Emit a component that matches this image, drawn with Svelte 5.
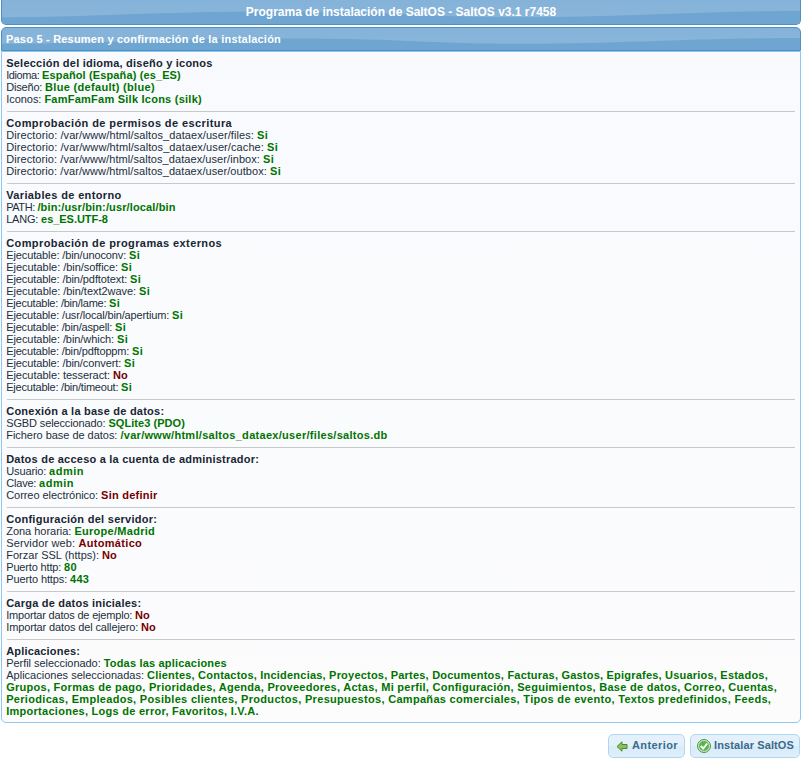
<script>
  // Each section: heading, heading end, rows of [label, value, value start, value end, warning].
  const LEFT = 6.2;
  const dir = 'Directorio: /var/www/html/saltos_dataex/user/';
  const si = (label, x) => [label, 'Si', x, x + 9.6];
  const no = (label, x) => [label, 'No', x, x + 13.3, true];
  const sections = [
    ['Selección del idioma, diseño y iconos', 212, [['Idioma:', 'Español (España) (es_ES)', 42.7, 180.3], ['Diseño:', 'Blue (default) (blue)', 45.7, 154.3], ['Iconos:', 'FamFamFam Silk Icons (silk)', 45, 201.3]]],
    ['Comprobación de permisos de escritura', 231.5, [si(dir + 'files:', 257.7), si(dir + 'cache:', 267.7), si(dir + 'inbox:', 263.7), si(dir + 'outbox:', 270.7)]],
    ['Variables de entorno', 121, [['PATH:', '/bin:/usr/bin:/usr/local/bin', 38, 175], ['LANG:', 'es_ES.UTF-8', 41.7, 107.3]]],
    ['Comprobación de programas externos', 221.5, [si('Ejecutable: /bin/unoconv:', 129.7), si('Ejecutable: /bin/soffice:', 121.7), si('Ejecutable: /bin/pdftotext:', 130.7), si('Ejecutable: /bin/text2wave:', 139.7), si('Ejecutable: /bin/lame:', 109.7), si('Ejecutable: /usr/local/bin/apertium:', 172.7), si('Ejecutable: /bin/aspell:', 115.7), si('Ejecutable: /bin/which:', 117.7), si('Ejecutable: /bin/pdftoppm:', 132.7), si('Ejecutable: /bin/convert:', 124.7), no('Ejecutable: tesseract:', 113.7), si('Ejecutable: /bin/timeout:', 121.7)]],
    ['Conexión a la base de datos:', 163.7, [['SGBD seleccionado:', 'SQLite3 (PDO)', 109, 184.3], ['Fichero base de datos:', '/var/www/html/saltos_dataex/user/files/saltos.db', 121, 387]]],
    ['Datos de acceso a la cuenta de administrador:', 258.5, [['Usuario:', 'admin', 49.7, 83.3], ['Clave:', 'admin', 39.7, 73.3], ['Correo electrónico:', 'Sin definir', 101.7, 157, true]]],
    ['Configuración del servidor:', 156.7, [['Zona horaria:', 'Europe/Madrid', 75, 154.5], ['Servidor web:', 'Automático', 79, 141.5, true], no('Forzar SSL (https):', 102.7), ['Puerto http:', '80', 64.7, 76.5], ['Puerto https:', '443', 70.7, 88.5]]],
    ['Carga de datos iniciales:', 140.7, [no('Importar datos de ejemplo:', 135.7), no('Importar datos del callejero:', 141.7)]],
    ['Aplicaciones:', 79.5, [
      ['Perfil seleccionado:', 'Todas las aplicaciones', 104.3, 226.2],
      ['Aplicaciones seleccionadas:', 'Clientes, Contactos, Incidencias, Proyectos, Partes, Documentos, Facturas, Gastos, Epigrafes, Usuarios, Estados,', 147.7, 767.3],
      ['', 'Grupos, Formas de pago, Prioridades, Agenda, Proveedores, Actas, Mi perfil, Configuración, Seguimientos, Base de datos, Correo, Cuentas,', 6.9, 776.5],
      ['', 'Periodicas, Empleados, Posibles clientes, Productos, Presupuestos, Campañas comerciales, Tipos de evento, Textos predefinidos, Feeds,', 6.9, 770.7],
      ['', 'Importaciones, Logs de error, Favoritos, I.V.A.', 6.9, 258.3]
    ]]
  ];

  // Spreads the letters of a text evenly over the given width.
  function fit(node, width) {
    const natural = node.getBoundingClientRect().width;
    node.style.letterSpacing = (width - natural) / node.textContent.length + 'px';
  }
</script>

{#snippet wave()}
  <svg class="wave" viewBox="0 0 798 23" preserveAspectRatio="none" aria-hidden="true">
    <path d="M0 16.5C100 16.5 150 11 280 11S420 16.5 520 16.5S690 10.5 798 10.5V23H0Z" />
  </svg>
{/snippet}

<div class="page">
  <header class="bar title">{@render wave()}<span use:fit={310.3}>Programa de instalación de SaltOS - SaltOS v3.1 r7458</span></header>
  <h3 class="bar step">{@render wave()}<span use:fit={275}>Paso 5 - Resumen y confirmación de la instalación</span></h3>
  <main>
    {#each sections as [heading, end, rows]}
      <section>
        <h4><span use:fit={end + 0.6 - LEFT}>{heading}</span></h4>
        {#each rows as [label, value, x1, x2, bad]}
          <div class="row">{#if label}<span use:fit={x1 - 0.6 - LEFT}>{label + ' '}</span>{/if}<b class:bad use:fit={x2 - x1 + 1.2}>{value}</b></div>
        {/each}
      </section>
    {/each}
  </main>
  <footer>
    <button class="prev">
      <svg width="16" height="16" viewBox="0 0 16 16"><path d="M3 8.5 8 3.8v2.7h5v4H8v2.7Z" fill="#8bc05c" stroke="#4c8b2c" /></svg>
      <span use:fit={46}>Anterior</span>
    </button>
    <button class="next">
      <svg width="16" height="16" viewBox="0 0 16 16"><circle cx="8" cy="8" r="6.5" fill="#c8e8c1" stroke="#4a9b47" /><circle cx="8" cy="8" r="5" fill="#5cb452" /><path d="m4.8 8 2.4 2.5 4-5" fill="none" stroke="#fff" stroke-width="2" /></svg>
      <span use:fit={80}>Instalar SaltOS</span>
    </button>
  </footer>
</div>

<style>
  :global(body) { margin: 0; background: #fff; }
  .page { width: 800px; height: 758px; margin-left: 1px; font: 11px/12px "Liberation Sans", Arial, sans-serif; color: #222f3c; }
  .bar { position: relative; box-sizing: border-box; margin: 0; border: 1px solid #4d90c1; background: linear-gradient(#85b2d9, #8ab6da); color: #fff; font-weight: bold; overflow: hidden; white-space: nowrap; }
  .bar span { position: relative; display: inline-block; }
  .wave { position: absolute; left: 0; top: 0; width: 100%; height: 100%; fill: #6ea6d1; }
  .title { height: 25px; border-top: 0; border-radius: 0 0 5px 5px; text-align: center; font-size: 12px; line-height: 24px; }
  .step { height: 24px; margin-top: 2px; border-radius: 5px 5px 0 0; padding-left: 4px; font-size: 11px; line-height: 23px; }
  main { box-sizing: border-box; height: 672px; padding: 5px; border: 1px solid #8dc8f5; border-radius: 0 0 5px 5px; background: linear-gradient(#f8fafd, #fcfcfd); }
  section + section { margin-top: 6px; padding-top: 5px; border-top: 1px solid #c5c9cc; }
  h4 { margin: 0 0 0 -0.8px; font-size: 11px; line-height: 12px; font-weight: bold; color: #182633; }
  h4 span { display: inline-block; vertical-align: top; }
  .row { display: flex; height: 12px; margin-left: -0.8px; white-space: pre; }
  .row span, .row b { flex: none; }
  .row b { color: #007400; }
  .row b.bad { color: #740000; }
  footer { display: flex; justify-content: flex-end; gap: 5px; padding: 11px 1px 0 0; }
  button { box-sizing: border-box; display: flex; align-items: center; height: 24px; padding: 0 0 0 5px; border: 1px solid #aed7f4; border-radius: 5px; background: linear-gradient(#e4f1fb 50%, #d7ebf9 50%, #e0effa); color: #3a6a8c; font: bold 11px/20px "Liberation Sans", Arial, sans-serif; white-space: nowrap; }
  button span { flex: none; padding-bottom: 2px; }
  .prev { width: 77px; }
  .next { width: 110px; }
  button svg { flex: none; margin-right: 2px; }
</style>
